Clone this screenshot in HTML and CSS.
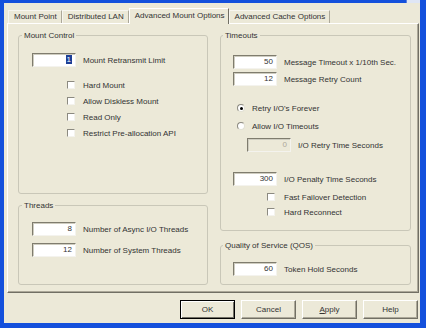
FILE: index.html
```html
<!DOCTYPE html>
<html lang="en">

<head>
    <meta charset="utf-8" />
    <title>Advanced Mount Options</title>
    <link rel="stylesheet" href="styles.css">
</head>

<body>

    <div class="window">
        <div class="titlebar">
            <span class="close-btn"></span>
        </div>

        <div class="dialog">
            <div class="tabs">
                <span class="tab">Mount Point</span>
                <span class="tab">Distributed LAN</span>
                <span class="tab active">Advanced Mount Options</span>
                <span class="tab">Advanced Cache Options</span>
            </div>

            <div class="panel">
                <div class="column">
                    <div class="group mount-control">
                        <div class="legend">Mount Control</div>
                        <div class="row first-row">
                            <span class="edit"><span class="selected">1</span></span>
                            <span>Mount Retransmit Limit</span>
                        </div>
                        <div class="check-list">
                            <div class="check-row"><span class="checkbox"></span>Hard Mount</div>
                            <div class="check-row"><span class="checkbox"></span>Allow Diskless Mount</div>
                            <div class="check-row"><span class="checkbox"></span>Read Only</div>
                            <div class="check-row"><span class="checkbox"></span>Restrict Pre-allocation API</div>
                        </div>
                    </div>

                    <div class="group threads">
                        <div class="legend">Threads</div>
                        <div class="row first-row">
                            <span class="edit">8</span>
                            <span>Number of Async I/O Threads</span>
                        </div>
                        <div class="row second-row">
                            <span class="edit">12</span>
                            <span>Number of System Threads</span>
                        </div>
                    </div>
                </div>

                <div class="column right">
                    <div class="group timeouts">
                        <div class="legend">Timeouts</div>
                        <div class="row first-row">
                            <span class="edit">50</span>
                            <span>Message Timeout x 1/10th Sec.</span>
                        </div>
                        <div class="row second-row">
                            <span class="edit">12</span>
                            <span>Message Retry Count</span>
                        </div>
                        <div class="radio-row forever">
                            <span class="radio on"></span>Retry I/O's Forever
                        </div>
                        <div class="radio-row">
                            <span class="radio"></span>Allow I/O Timeouts
                        </div>
                        <div class="row retry-time">
                            <span class="edit disabled">0</span>
                            <span>I/O Retry Time Seconds</span>
                        </div>
                        <div class="row penalty">
                            <span class="edit">300</span>
                            <span>I/O Penalty Time Seconds</span>
                        </div>
                        <div class="check-row failover"><span class="checkbox"></span>Fast Failover Detection</div>
                        <div class="check-row reconnect"><span class="checkbox"></span>Hard Reconnect</div>
                    </div>

                    <div class="group qos">
                        <div class="legend">Quality of Service (QOS)</div>
                        <div class="row first-row">
                            <span class="edit">60</span>
                            <span>Token Hold Seconds</span>
                        </div>
                    </div>
                </div>
            </div>

            <div class="buttons">
                <button type="button" class="default">OK</button>
                <button type="button">Cancel</button>
                <button type="button"><u>A</u>pply</button>
                <button type="button">Help</button>
            </div>
        </div>
    </div>

</body>

</html>
```

FILE: styles.css
```css
* {
    box-sizing: border-box;
}

body {
    margin: 0;
    font-family: "Liberation Sans", Arial, sans-serif;
    font-size: 8px;
    color: #333;
    background: #0c4ad9;
}

.window {
    width: 426px;
    height: 328px;
    display: flex;
    flex-direction: column;
    border-left: 4px solid #1450dc;
    border-right: 6px solid #1450dc;
    border-bottom: 5px solid #1450dc;
    box-shadow: inset 1px 0 #0a2fa0, inset -1px -1px #0a2fa0;
}

.titlebar {
    height: 3px;
    display: flex;
    justify-content: flex-end;
    background: #1450dc;
}

.close-btn {
    width: 14px;
    background: #dfe6f5;
    border-left: 1px solid #5a80e0;
}

.dialog {
    flex: 1;
    background: #ece9d8;
    padding: 5px 0 0 3px;
    display: flex;
    flex-direction: column;
}

/* tab strip */
.tabs {
    display: flex;
    align-items: flex-end;
    height: 15px;
    padding-left: 1px;
}

.tab {
    height: 13px;
    line-height: 12px;
    padding: 0 4px 0 5px;
    border-top: 1px solid #f7f6f0;
    border-left: 1px solid #f7f6f0;
    border-right: 1px solid #aca899;
    white-space: nowrap;
}

.tab.active {
    height: 16px;
    line-height: 14px;
    margin-bottom: -1px;
    padding: 0 3px 0 5px;
    background: #ece9d8;
    border-top-color: #fff;
    border-left-color: #fff;
    border-right-color: #716f64;
    position: relative;
    z-index: 1;
}

.panel {
    width: 412px;
    height: 270px;
    border: 1px solid;
    border-color: #fff #716f64 #716f64 #fff;
    box-shadow: inset -1px -1px #aca899;
    display: grid;
    grid-template-columns: 190px 191px;
    column-gap: 12px;
    align-items: start;
    padding: 11px 7px 0 10px;
}

.column {
    display: flex;
    flex-direction: column;
    gap: 11px;
}

.column.right {
    gap: 14px;
}

/* group boxes */
.group {
    border: 1px solid #c9c7b8;
    border-radius: 3px;
    padding-left: 13px;
}

.legend {
    width: max-content;
    margin: -5px 0 0 -10px;
    padding: 0 2px;
    line-height: 10px;
    background: #ece9d8;
}

.mount-control {
    height: 159px;
}

.threads {
    height: 80px;
}

.timeouts {
    height: 196px;
    padding-left: 12px;
}

.qos {
    height: 40px;
    padding-left: 12px;
}

.row {
    display: flex;
    align-items: center;
    gap: 7px;
    height: 14px;
    white-space: nowrap;
}

.edit {
    width: 44px;
    height: 14px;
    line-height: 12px;
    padding-right: 3px;
    text-align: right;
    background: #fff;
    border: 1px solid;
    border-color: #7f7c6e #f4f3ee #f4f3ee #7f7c6e;
    box-shadow: inset 1px 1px #cfcdc0;
}

.edit.disabled {
    background: #ece9d8;
    color: #aca899;
}

.selected {
    background: #1d3f96;
    color: #fff;
    padding: 0 1px;
}

.mount-control .first-row {
    margin-top: 12px;
}

.check-list {
    margin-top: 10px;
    padding-left: 35px;
}

.check-row {
    display: flex;
    align-items: center;
    gap: 8px;
    height: 16px;
    white-space: nowrap;
}

.checkbox {
    width: 8px;
    height: 8px;
    background: #fff;
    border: 1px solid;
    border-color: #8c8a80 #f4f3ee #f4f3ee #8c8a80;
}

.threads .first-row {
    margin-top: 11px;
}

.threads .second-row {
    margin-top: 7px;
}

.timeouts .first-row {
    margin-top: 14px;
}

.timeouts .second-row {
    margin-top: 3px;
}

.radio-row {
    display: flex;
    align-items: center;
    gap: 7px;
    height: 14px;
    margin-top: 4px;
    padding-left: 4px;
    white-space: nowrap;
}

.radio-row.forever {
    margin-top: 15px;
}

.radio {
    width: 8px;
    height: 8px;
    border-radius: 50%;
    background: #fff;
    border: 1px solid;
    border-color: #8c8a80 #e2e0d4 #e2e0d4 #8c8a80;
    display: flex;
    align-items: center;
    justify-content: center;
}

.radio.on::after {
    content: "";
    width: 3px;
    height: 3px;
    border-radius: 50%;
    background: #000;
}

.retry-time {
    margin-top: 5px;
    padding-left: 14px;
}

.penalty {
    margin-top: 20px;
}

.timeouts .check-row {
    height: 14px;
    gap: 9px;
    padding-left: 34px;
}

.failover {
    margin-top: 4px;
}

.reconnect {
    margin-top: 1px;
}

.qos .first-row {
    margin-top: 11px;
}

/* dialog buttons */
.buttons {
    display: flex;
    justify-content: flex-end;
    gap: 6px;
    margin-top: 7px;
    padding-right: 2px;
}

button {
    width: 55px;
    height: 19px;
    padding: 0;
    font-family: "Liberation Sans", Arial, sans-serif;
    font-size: 8px;
    color: #333;
    background: #ece9d8;
    border: 1px solid;
    border-color: #fff #716f64 #716f64 #fff;
    box-shadow: inset -1px -1px #aca899;
}

button.default {
    border-color: #000;
    box-shadow: inset 1px 1px #fff, inset -1px -1px #716f64;
}
```
